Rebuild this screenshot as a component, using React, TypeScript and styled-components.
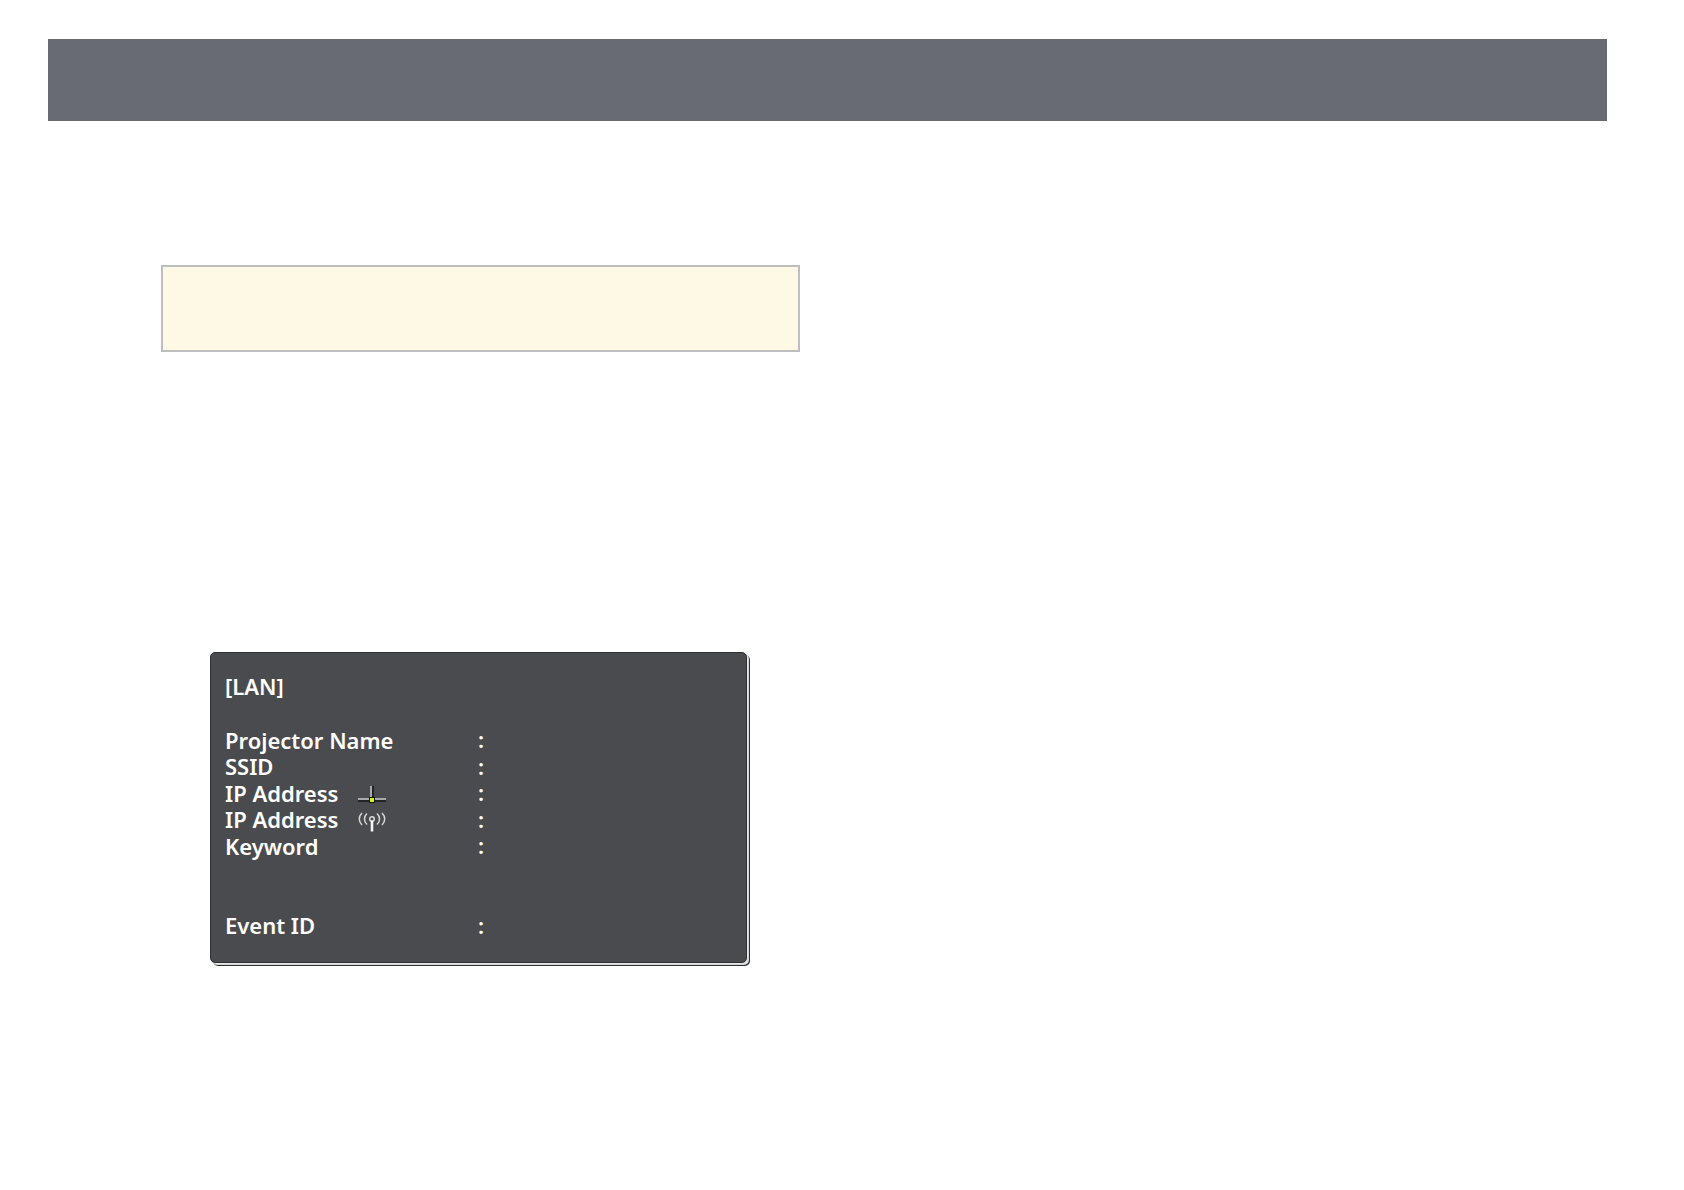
import React from "react";
import styled, { createGlobalStyle } from "styled-components";

const GlobalStyle = createGlobalStyle`
  * { box-sizing: border-box; }
  body {
    margin: 0;
    background: #ffffff;
    font-family: "Noto Sans", "Open Sans", sans-serif;
  }
`;

const Page = styled.div`
  min-height: 100vh;
  padding: 39px 77px 40px 48px;
`;

const Banner = styled.header`
  height: 82px;
  background: #686b73;
`;

const Columns = styled.div`
  display: grid;
  grid-template-columns: 23fr 25fr;
  column-gap: 113px;
  padding: 144px 0 0 113px;
`;

const Article = styled.main`
  display: flex;
  flex-direction: column;
  gap: 300px;
`;

const Note = styled.aside`
  height: 87px;
  border: 2px solid #bebebe;
  background: #fdf9e5;
`;

const Screen = styled.section`
  width: 537px;
  margin-left: 49px;
  padding: 20px 14px 24px;
  border: 1px solid #303134;
  border-radius: 5px;
  background: #4a4b4e;
  box-shadow: 1px 1px 0 #e6e6e6, 2px 2px 0 #d4d4d4, 3px 3px 0 #303134;
  color: #ffffff;
  font-size: 22px;
  font-weight: 600;
  line-height: 26px;
`;

const Title = styled.h1`
  margin: 0 0 27px;
  font: inherit;
`;

const Fields = styled.dl`
  display: grid;
  grid-template-columns: 1fr;
  grid-template-rows: repeat(8, 1fr);
  height: 212px;
  margin: 0;
`;

const Field = styled.div<{ $row: number }>`
  grid-row: ${(p) => p.$row};
  display: grid;
  grid-template-columns: 253px 1fr;
`;

const Name = styled.dt`
  display: flex;
  align-items: flex-end;
  gap: 20px;
`;

const Value = styled.dd`
  margin: 0;
`;

const Icon = styled.svg`
  display: block;
  width: 28px;
  height: 20px;
`;

const WiredIcon = () => (
  <Icon viewBox="0 1 28 20" role="img" aria-label="Wired LAN" shapeRendering="crispEdges">
    <path d="M14 1h2v12h-2zM0 15h28v2H0z" fill="#232426" />
    <path d="M12 1h2v12h-2zM0 13h28v2H0z" fill="#a9aaab" />
    <rect x="11" y="12" width="6" height="6" fill="#17180c" />
    <rect x="12" y="13" width="4" height="4" fill="#d9ee24" />
  </Icon>
);

const WirelessIcon = () => (
  <Icon viewBox="0 0 28 20" role="img" aria-label="Wireless LAN" fill="none" stroke="#d8d8d8">
    <path
      d="M4 1C.4 4.500.4 9.500 4 13M24 1c3.600 3.500 3.600 8.500 0 12M9 1.500c-3.400 3-3.400 8 0 11M19 1.500c3.400 3 3.400 8 0 11"
      strokeWidth="1.500"
    />
    <circle cx="14" cy="7" r="2.300" strokeWidth="1.500" />
    <path d="M14 8.500v11" strokeWidth="2.600" stroke="#f4f4f4" />
  </Icon>
);

const fields = [
  { row: 1, name: "Projector Name" },
  { row: 2, name: "SSID" },
  { row: 3, name: "IP Address", icon: <WiredIcon /> },
  { row: 4, name: "IP Address", icon: <WirelessIcon /> },
  { row: 5, name: "Keyword" },
  { row: 8, name: "Event ID" },
];

export default function App() {
  return (
    <>
      <GlobalStyle />
      <Page>
        <Banner />
        <Columns>
          <Article>
            <Note />
            <Screen>
              <Title>[LAN]</Title>
              <Fields>
                {fields.map((f) => (
                  <Field key={f.row} $row={f.row}>
                    <Name>
                      {f.name}
                      {f.icon}
                    </Name>
                    <Value>:</Value>
                  </Field>
                ))}
              </Fields>
            </Screen>
          </Article>
        </Columns>
      </Page>
    </>
  );
}
